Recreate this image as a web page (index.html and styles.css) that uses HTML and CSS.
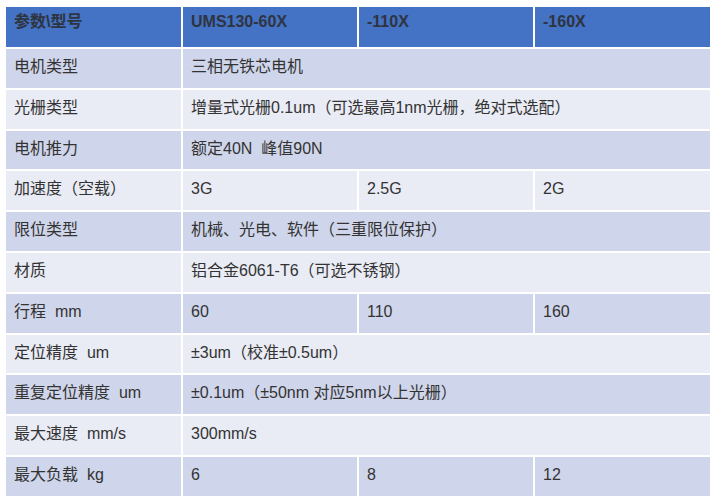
FILE: index.html
```html
<!DOCTYPE html>
<html lang="zh-CN">
<head>
<meta charset="utf-8">
<title>参数表</title>
<link rel="stylesheet" href="styles.css">
</head>
<body>
<div class="spec">
  <div class="cell head">参数\型号</div>
  <div class="cell head">UMS130-60X</div>
  <div class="cell head">-110X</div>
  <div class="cell head">-160X</div>

  <div class="cell dark">电机类型</div>
  <div class="cell dark span3">三相无铁芯电机</div>

  <div class="cell light">光栅类型</div>
  <div class="cell light span3">增量式光栅0.1um（可选最高1nm光栅，绝对式选配）</div>

  <div class="cell dark">电机推力</div>
  <div class="cell dark span3">额定40N&nbsp; 峰值90N</div>

  <div class="cell light">加速度（空载）</div>
  <div class="cell light">3G</div>
  <div class="cell light">2.5G</div>
  <div class="cell light">2G</div>

  <div class="cell dark">限位类型</div>
  <div class="cell dark span3">机械、光电、软件（三重限位保护）</div>

  <div class="cell light">材质</div>
  <div class="cell light span3">铝合金6061-T6（可选不锈钢）</div>

  <div class="cell dark">行程&nbsp; mm</div>
  <div class="cell dark">60</div>
  <div class="cell dark">110</div>
  <div class="cell dark">160</div>

  <div class="cell light">定位精度&nbsp; um</div>
  <div class="cell light span3">±3um（校准±0.5um）</div>

  <div class="cell dark">重复定位精度&nbsp; um</div>
  <div class="cell dark span3">±0.1um（±50nm 对应5nm以上光栅）</div>

  <div class="cell light">最大速度&nbsp; mm/s</div>
  <div class="cell light span3">300mm/s</div>

  <div class="cell dark">最大负载&nbsp; kg</div>
  <div class="cell dark">6</div>
  <div class="cell dark">8</div>
  <div class="cell dark">12</div>
</div>
</body>
</html>
```

FILE: styles.css
```css
html, body {
  margin: 0;
  padding: 0;
  background: #ffffff;
}

body {
  font-family: "Liberation Sans", "Noto Sans CJK SC", sans-serif;
  font-size: 16px;
  color: #333333;
}

.spec {
  display: grid;
  grid-template-columns: 175px 174px 174px 175px;
  grid-template-rows: 40px repeat(11, 38.8px);
  gap: 2px;
  margin: 7px 0 0 6px;
  width: 704px;
}

.cell {
  box-sizing: border-box;
  padding: 8px 0 0 8px;
  line-height: 20px;
  white-space: nowrap;
}

.head {
  background: #4472c4;
  font-weight: bold;
  color: #2e3440;
  padding-top: 5px;
}

.dark {
  background: #cfd5ea;
}

.light {
  background: #e9ebf5;
}

.span3 {
  grid-column: span 3;
}
```
